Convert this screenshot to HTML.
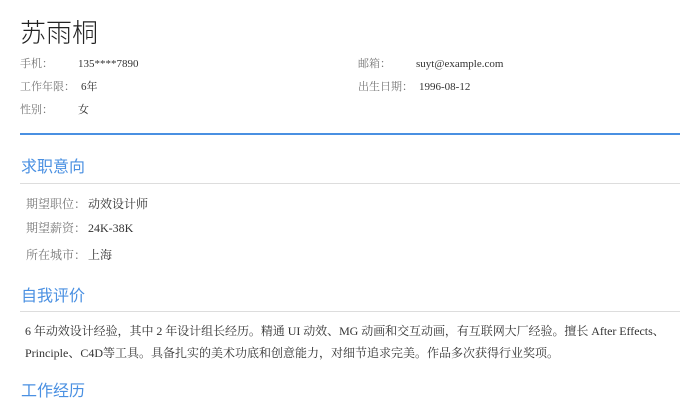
<!DOCTYPE html>
<html><head><meta charset="utf-8"><style>
body{margin:0;width:700px;height:400px;overflow:hidden;background:#fff;font-family:"Liberation Serif","Noto Serif CJK SC",serif;color:#333}
.a{position:absolute;white-space:nowrap;line-height:1}
.l{color:#777;font-size:11px}
.v{font-size:11px;color:#333}
.h{font-family:"Liberation Sans","Noto Sans CJK SC",sans-serif;color:#4a90e2;font-size:16px}
.il{color:#777;font-size:12px}
.iv{font-size:12px;color:#333}
</style></head><body>
<div class="a" style="left:20px;top:20px;font-size:26px;font-family:'Liberation Sans','Noto Sans CJK SC',sans-serif;color:#222;font-weight:300">苏雨桐</div>
<div class="a l" style="left:20px;top:59px">手机：</div><div class="a v" style="left:78px;top:59px">135****7890</div>
<div class="a l" style="left:20px;top:82px">工作年限：</div><div class="a v" style="left:81px;top:82px">6年</div>
<div class="a l" style="left:20px;top:105px">性别：</div><div class="a v" style="left:78px;top:105px">女</div>
<div class="a l" style="left:358px;top:59px">邮箱：</div><div class="a v" style="left:416px;top:59px">suyt@example.com</div>
<div class="a l" style="left:358px;top:82px">出生日期：</div><div class="a v" style="left:419px;top:82px">1996-08-12</div>
<div class="a" style="left:20px;top:133px;width:660px;height:2px;background:#4a90e2"></div>
<div class="a h" style="left:21px;top:160px">求职意向</div>
<div class="a" style="left:20px;top:183px;width:660px;height:1px;background:#ddd"></div>
<div class="a il" style="left:26px;top:198px">期望职位：</div><div class="a iv" style="left:88px;top:198px">动效设计师</div>
<div class="a il" style="left:26px;top:222px">期望薪资：</div><div class="a iv" style="left:88px;top:222px">24K-38K</div>
<div class="a il" style="left:26px;top:249px">所在城市：</div><div class="a iv" style="left:88px;top:249px">上海</div>
<div class="a h" style="left:21px;top:289px">自我评价</div>
<div class="a" style="left:20px;top:311px;width:660px;height:1px;background:#ddd"></div>
<div class="a iv" style="left:25px;top:325px;letter-spacing:-0.05px">6 年动效设计经验，其中 2 年设计组长经历。精通 UI 动效、MG 动画和交互动画，有互联网大厂经验。擅长 After Effects、</div>
<div class="a iv" style="left:25px;top:347px">Principle、C4D等工具。具备扎实的美术功底和创意能力，对细节追求完美。作品多次获得行业奖项。</div>
<div class="a h" style="left:21px;top:384px">工作经历</div>
</body></html>
